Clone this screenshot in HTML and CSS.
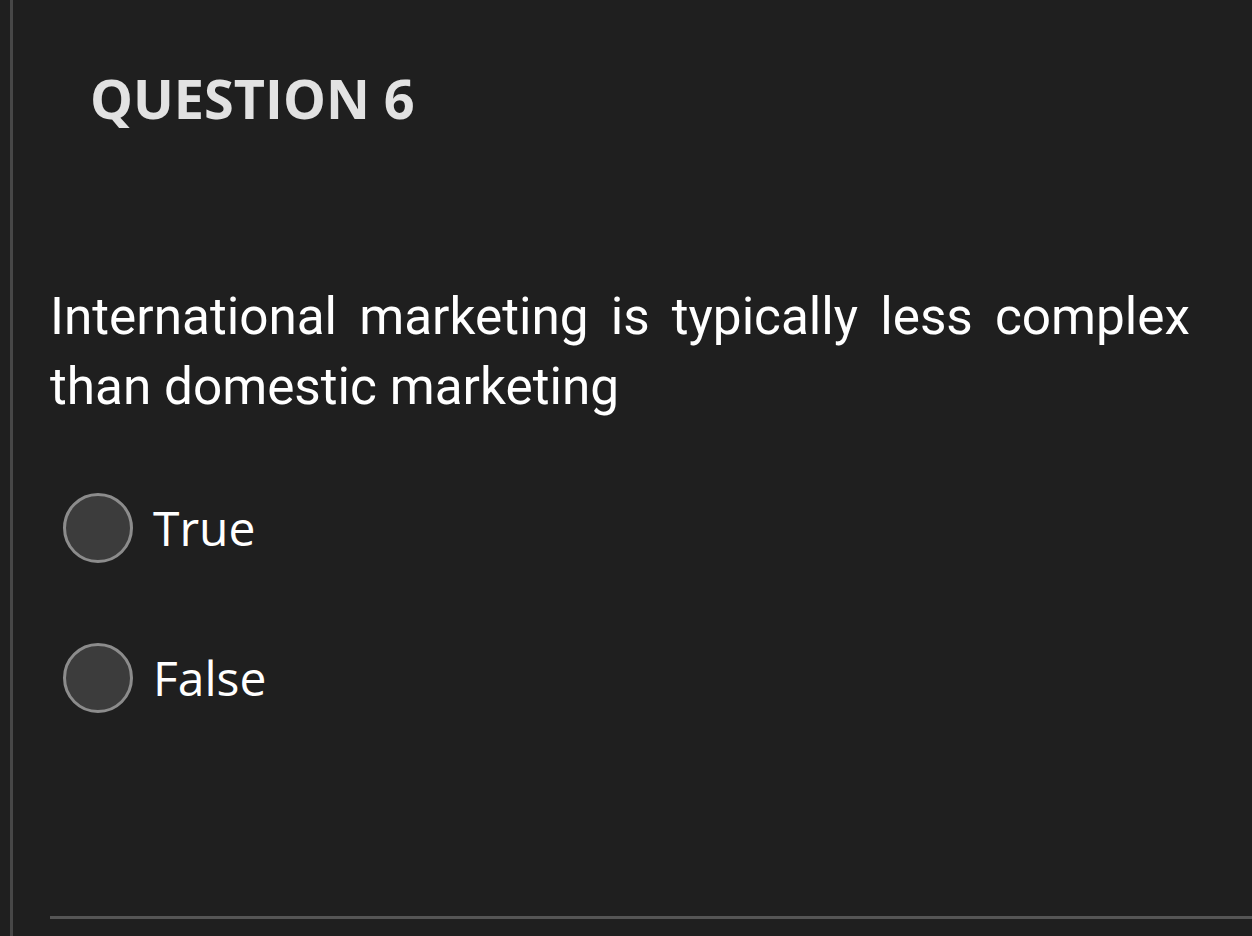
FILE: index.html
```html
<!DOCTYPE html>
<html>
<head>
<meta charset="utf-8">
<link rel="stylesheet" href="styles.css">
</head>
<body>
<div class="page">
  <div class="content">
    <h1 class="title">QUESTION 6</h1>
    <p class="question">International marketing is typically less complex than domestic marketing</p>
    <div class="options">
      <label class="option"><span class="radio"></span><span class="label">True</span></label>
      <label class="option"><span class="radio"></span><span class="label">False</span></label>
    </div>
    <div class="divider"></div>
  </div>
</div>
</body>
</html>
```
FILE: styles.css
```css
html, body {
  margin: 0;
  padding: 0;
  background: #1f1f1f;
  height: 100%;
}
.page {
  margin-left: 10px;
  border-left: 3px solid #474747;
  height: 936px;
  overflow: hidden;
}
.content {
  padding-left: 37px;
  padding-top: 58px;
}
.title {
  margin: 0 0 0 40px;
  font-family: "Open Sans", sans-serif;
  font-weight: 700;
  font-size: 54px;
  line-height: 80px;
  color: #e2e2e2;
}
.question {
  margin: 144px 0 0 0;
  width: 1140px;
  font-family: Roboto, sans-serif;
  font-size: 51.3px;
  line-height: 70px;
  color: #ffffff;
  text-align: justify;
}
.options {
  display: flex;
  flex-direction: column;
  gap: 82px;
  margin-top: 72px;
  padding-left: 13px;
}
.option {
  display: flex;
  align-items: center;
  gap: 20px;
  height: 68px;
}
.radio {
  box-sizing: border-box;
  width: 70px;
  height: 70px;
  border-radius: 50%;
  border: 3px solid #8c8c8c;
  background: #3c3c3c;
  flex: none;
}
.label {
  font-family: "Open Sans", sans-serif;
  font-size: 48px;
  color: #ffffff;
  line-height: 68px;
}
.divider {
  margin-top: 204px;
  height: 3px;
  background: #555555;
}
```
